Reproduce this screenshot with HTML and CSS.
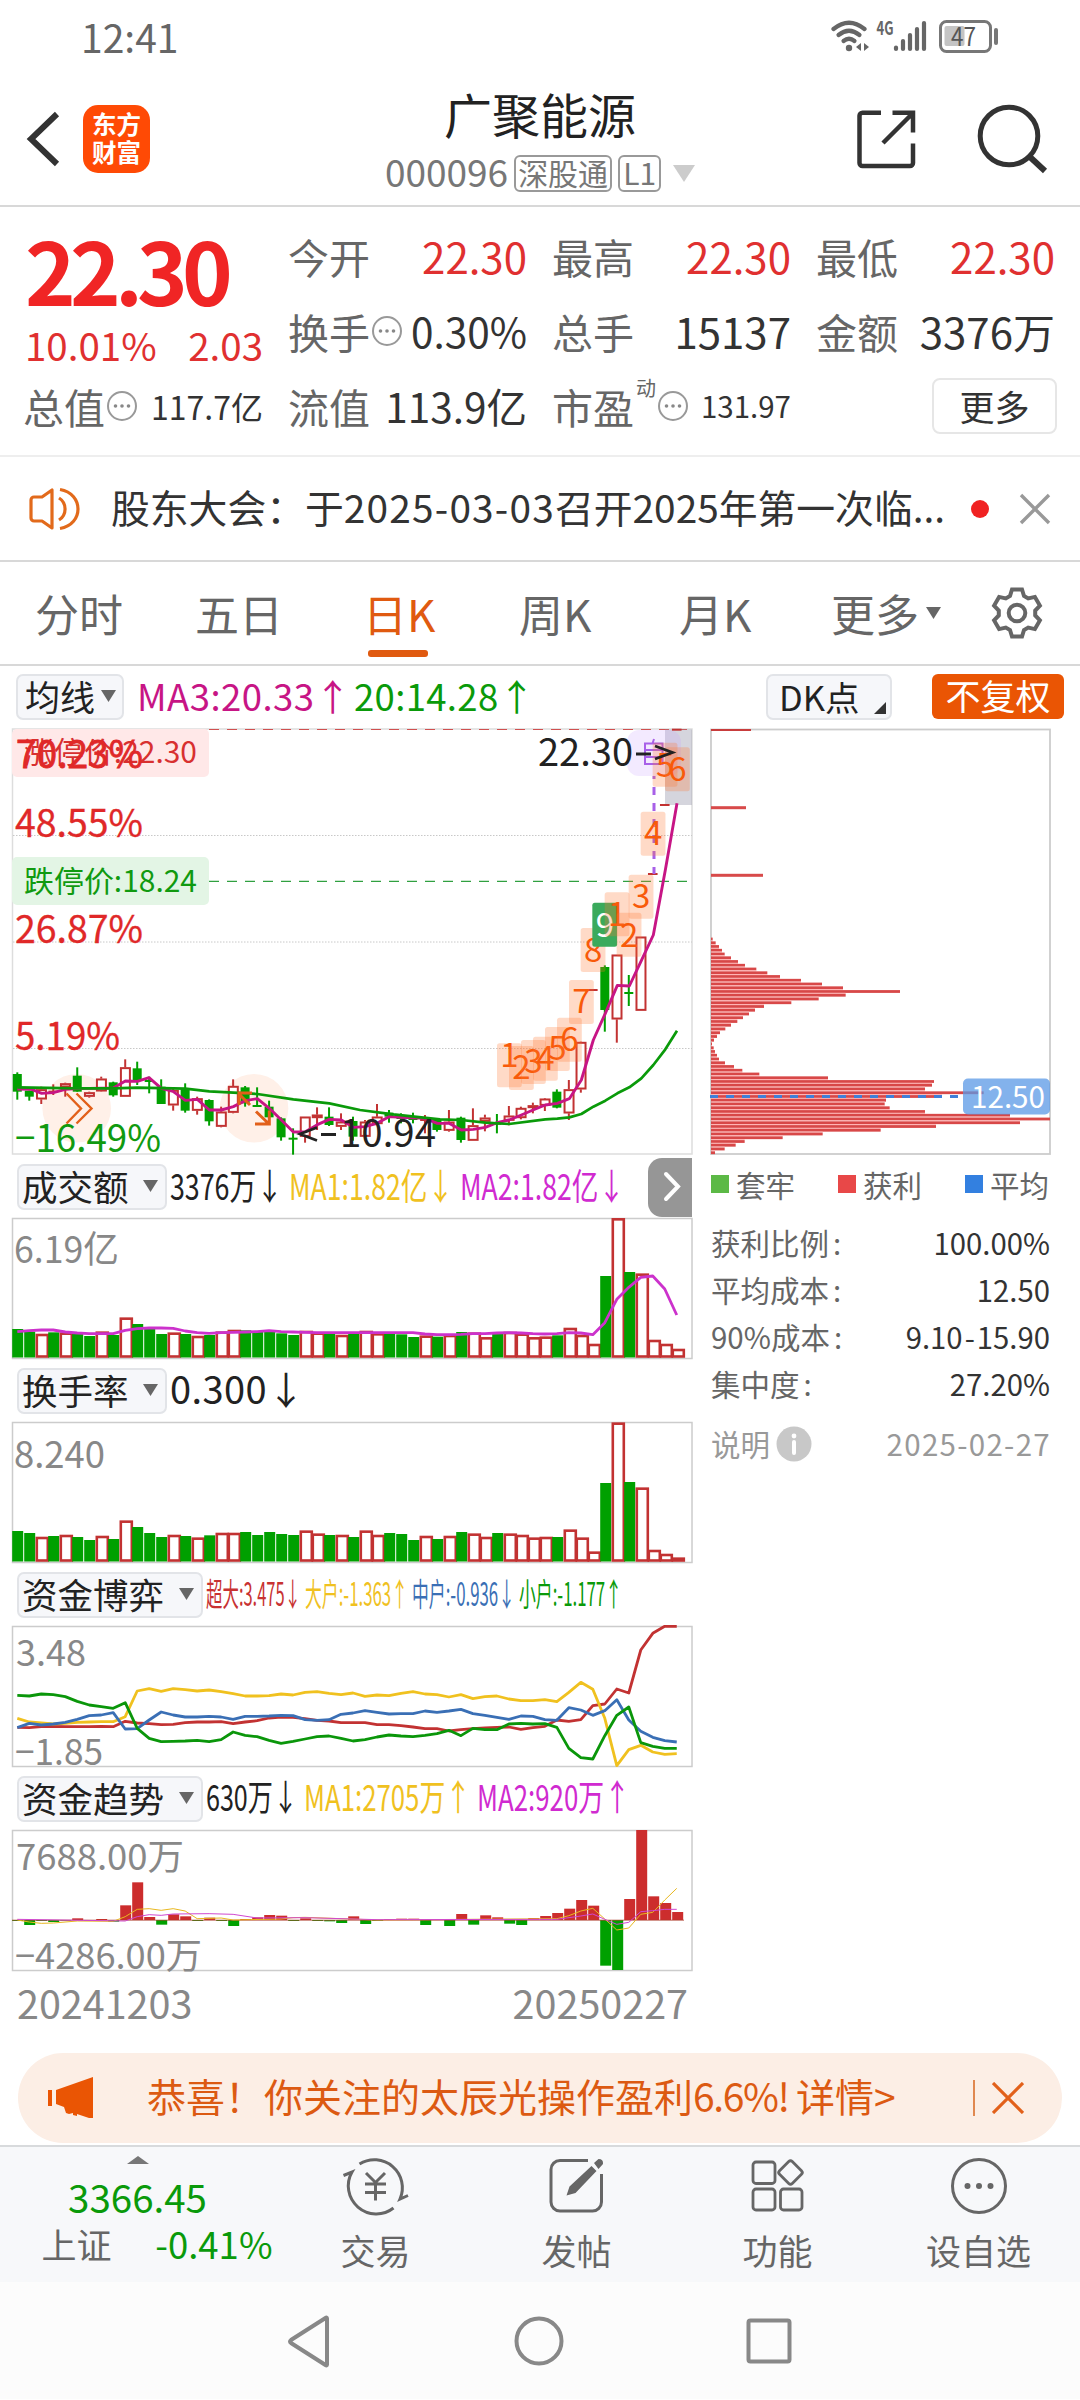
FILE: index.html
```html
<!DOCTYPE html>
<html lang="zh-CN">
<head>
<meta charset="utf-8">
<title>广聚能源 000096</title>
<link rel="stylesheet" href="styles.css">
</head>
<body>
<div class="statusbar">
  <span class="clock">12:41</span>
  <svg class="status-icons" width="180" height="44" viewBox="826 14 180 44">
    <g fill="none" stroke="#666" stroke-width="4.2" stroke-linecap="round">
      <path d="M833.5 29 Q849 16.500 864.500 29"/><path d="M838.500 35 Q849 26.500 859.500 35"/><path d="M843.500 41 Q849 36.500 854.500 41"/>
    </g>
    <circle cx="849" cy="48" r="3.200" fill="#666"/>
    <path d="M861 43v8l-5-4zM864 43v8l5-4z" fill="#666"/>
    <text x="876.500" y="34.500" class="net" textLength="17" lengthAdjust="spacingAndGlyphs">4G</text>
    <g stroke="#666" stroke-width="4.200" stroke-linecap="round"><path d="M896 47.500v1.500M903 41v8M910 35v14M917 29v20M924 23v26"/></g>
    <rect x="940.500" y="21.500" width="50" height="30" rx="6" fill="none" stroke="#777" stroke-width="3"/>
    <rect x="944.500" y="26" width="20" height="20" rx="2" fill="#c4c4c4"/>
    <text x="951" y="46" class="bat" textLength="25" lengthAdjust="spacingAndGlyphs">47</text>
    <path d="M996 30v13" stroke="#777" stroke-width="4" stroke-linecap="round"/>
  </svg>
</div>

<header class="header">
  <div class="head-left">
    <svg width="36" height="60" viewBox="0 0 36 60"><path d="M32 5L6 30l26 25" fill="none" stroke="#333" stroke-width="6"/></svg>
    <div class="logo"><span>东方</span><span>财富</span></div>
  </div>
  <div class="head-mid">
    <h1>广聚能源</h1>
    <div class="sub"><span>000096</span><i class="badge wide">深股通</i><i class="badge">L1</i>
      <svg width="22" height="17" viewBox="0 0 22 17"><path d="M0 0h22L11 17z" fill="#ccc"/></svg></div>
  </div>
  <svg class="head-icons" width="200" height="76" viewBox="850 100 200 76">
    <g fill="none" stroke="#333" stroke-width="4.500" stroke-linejoin="round">
      <path d="M881 112.700H862.500a3 3 0 0 0-3 3V163a3 3 0 0 0 3 3H910a3 3 0 0 0 3-3V143.500"/>
      <path d="M892.500 112.700H913V132.500M912 114L883 143" stroke-linejoin="miter"/>
      <circle cx="1009" cy="136" r="28.800" stroke-width="5"/><path d="M1030 157l15 14" stroke-width="6"/>
    </g>
  </svg>
</header>

<section class="quote">
  <div class="price"><div class="big">22.30</div><div class="chg"><span>10.01%</span><span>2.03</span></div></div>
  <div class="cell"><label>今开</label><b class="up">22.30</b></div>
  <div class="cell"><label>最高</label><b class="up">22.30</b></div>
  <div class="cell"><label>最低</label><b class="up">22.30</b></div>
  <div class="cell"><label>换手</label><svg class="dots"><use href="#dots"/></svg><b class="mid">0.30%</b></div>
  <div class="cell"><label>总手</label><b>15137</b></div>
  <div class="cell"><label>金额</label><b>3376万</b></div>
  <div class="cell first"><label>总值</label><svg class="dots"><use href="#dots"/></svg><b class="small">117.7亿</b></div>
  <div class="cell"><label>流值</label><b class="mid">113.9亿</b></div>
  <div class="cell"><label>市盈</label><sup>动</sup><svg class="dots"><use href="#dots"/></svg><b class="tiny">131.97</b></div>
  <div class="cell"><button class="more">更多</button></div>
</section>
<svg width="0" height="0" class="defs"><symbol id="dots" viewBox="0 0 32 32"><circle cx="16" cy="16" r="14" fill="none" stroke="#999" stroke-width="2"/><g fill="#888"><circle cx="9.500" cy="16" r="1.800"/><circle cx="16" cy="16" r="1.800"/><circle cx="22.500" cy="16" r="1.800"/></g></symbol></svg>

<section class="notice">
  <svg width="52" height="46" viewBox="0 0 52 46" fill="none" stroke="#e26a1b" stroke-width="3.200">
    <path d="M23 4v38L13 35H5a3 3 0 0 1-3-3V14a3 3 0 0 1 3-3h8z" stroke-linejoin="round"/><path d="M30 12a13 13 0 0 1 0 22M31 3.500c24 4 24 35 0 39"/></svg>
  <p>股东大会：于<span class="dt">2025-03-03</span>召开2025年第一次临...</p>
  <i class="red-dot"></i>
  <svg width="32" height="32" viewBox="0 0 32 32"><path d="M2 2l28 28M30 2L2 30" stroke="#999" stroke-width="3.400"/></svg>
</section>

<nav class="tabs">
  <span>分时</span><span>五日</span><span class="on">日K</span><span>周K</span><span>月K</span><span>更多<svg width="15" height="12" viewBox="0 0 15 12"><path d="M0 0h15L7.500 12z" fill="#666"/></svg></span>
  <svg width="54" height="54" viewBox="-27 -27 54 54" fill="none" stroke="#666" stroke-width="4"><path d="M-7-17L-5-23.500H5L7-17L11.200-14.600L17.900-16.100L22.900-7.400L18.200-2.400V2.400L22.900 7.400L17.900 16.100L11.200 14.600L7 17L5 23.500H-5L-7 17L-11.200 14.600L-17.900 16.100L-22.900 7.400L-18.200 2.400V-2.400L-22.900-7.400L-17.900-16.100L-11.200-14.600Z"/><circle r="8.300"/></svg>
</nav>

<div class="ma-row">
  <span class="pick ma-pick">均线<svg width="15" height="12" viewBox="0 0 15 12"><path d="M0 0h15L7.500 12z" fill="#666"/></svg></span>
  <svg class="ma-text" width="420" height="60" viewBox="124 667 420 60">
    <text x="137" y="711" textLength="214" fill="#c71585">MA3:20.33↑</text>
    <text x="354" y="711" textLength="181" fill="#0a9a0a">20:14.28↑</text>
  </svg>
  <span class="pick dk">DK点<i></i></span>
  <span class="noadj">不复权</span>
</div>

<main class="board">
  <div class="left">
    <svg id="kline" width="700" height="430" viewBox="0 727 700 430"></svg>
    <div class="strip">
      <span class="pick">成交额<svg width="15" height="12" viewBox="0 0 15 12"><path d="M0 0h15L7.500 12z" fill="#666"/></svg></span>
      <svg width="525" height="60" viewBox="167 1157 525 60">
        <text x="170" y="1200" textLength="113" lengthAdjust="spacingAndGlyphs" fill="#222">3376万↓</text>
        <text x="289" y="1200" textLength="165" lengthAdjust="spacingAndGlyphs" fill="#f0c11f">MA1:1.82亿↓</text>
        <text x="460" y="1200" textLength="165" lengthAdjust="spacingAndGlyphs" fill="#d02ad0">MA2:1.82亿↓</text>
        <path d="M692 1158V1217H662a14 14 0 0 1-14-14v-31a14 14 0 0 1 14-14z" fill="#969696"/>
        <path d="M666 1174l12 12.500-12 12.500" fill="none" stroke="#fff" stroke-width="4" stroke-linecap="round"/>
      </svg>
    </div>
    <svg id="volume" width="700" height="143" viewBox="0 1217 700 143"></svg>
    <div class="strip s61">
      <span class="pick">换手率<svg width="15" height="12" viewBox="0 0 15 12"><path d="M0 0h15L7.500 12z" fill="#666"/></svg></span>
      <svg width="525" height="61" viewBox="167 1360 525 61">
        <text x="170" y="1404" textLength="135" font-size="38" fill="#222">0.300↓</text>
      </svg>
    </div>
    <svg id="turnover" width="700" height="143" viewBox="0 1421 700 143"></svg>
    <div class="strip s61">
      <span class="pick w4">资金博弈<svg width="15" height="12" viewBox="0 0 15 12"><path d="M0 0h15L7.500 12z" fill="#666"/></svg></span>
      <svg width="489" height="61" viewBox="203 1564 489 61" class="small-text">
        <text x="206" y="1606" textLength="95" lengthAdjust="spacingAndGlyphs" fill="#c83232">超大:3.475↓</text>
        <text x="305" y="1606" textLength="103" lengthAdjust="spacingAndGlyphs" fill="#f0c11f">大户:-1.363↑</text>
        <text x="412" y="1606" textLength="103" lengthAdjust="spacingAndGlyphs" fill="#3a6fb5">中户:-0.936↓</text>
        <text x="519" y="1606" textLength="103" lengthAdjust="spacingAndGlyphs" fill="#0a9a0a">小户:-1.177↑</text>
      </svg>
    </div>
    <svg id="game" width="700" height="143" viewBox="0 1625 700 143"></svg>
    <div class="strip s61">
      <span class="pick w4">资金趋势<svg width="15" height="12" viewBox="0 0 15 12"><path d="M0 0h15L7.500 12z" fill="#666"/></svg></span>
      <svg width="489" height="61" viewBox="203 1768 489 61">
        <text x="206" y="1811" textLength="92" lengthAdjust="spacingAndGlyphs" fill="#222">630万↓</text>
        <text x="304" y="1811" textLength="167" lengthAdjust="spacingAndGlyphs" fill="#f0c11f">MA1:2705万↑</text>
        <text x="477" y="1811" textLength="153" lengthAdjust="spacingAndGlyphs" fill="#d02ad0">MA2:920万↑</text>
      </svg>
    </div>
    <svg id="trend" width="700" height="143" viewBox="0 1829 700 143"></svg>
    <div class="dates"><span>20241203</span><span>20250227</span></div>
  </div>
  <aside class="right">
    <svg id="chips" width="369" height="430" viewBox="700 727 369 430"></svg>
    <ul class="legend"><li class="lg">套牢</li><li class="lr">获利</li><li class="lb">平均</li></ul>
    <dl class="stats">
      <div><dt>获利比例<s>:</s></dt><dd>100.00%</dd></div>
      <div><dt>平均成本<s>:</s></dt><dd>12.50</dd></div>
      <div><dt>90%成本<s>:</s></dt><dd>9.10<em>-</em>15.90</dd></div>
      <div><dt>集中度<s>:</s></dt><dd>27.20%</dd></div>
    </dl>
    <div class="explain"><span>说明</span><svg width="36" height="36" viewBox="0 0 36 36"><circle cx="18" cy="18" r="17.500" fill="#c8c8c8"/><circle cx="18" cy="10" r="2.400" fill="#fff"/><path d="M18 16v11" stroke="#fff" stroke-width="4" stroke-linecap="round"/></svg><time>2025-02-27</time></div>
  </aside>
</main>

<div class="banner">
  <svg width="46" height="42" viewBox="0 0 46 42"><path d="M0 13h4v16H0zM8 13L45 0v41H41L29 37v2l-4-1v-2l-4 1-3-1-2-6-8-3z" fill="#ea5504"/></svg>
  <p>恭喜！你关注的太辰光操作盈利<span>6.6%! </span>详情&gt;</p>
  <i></i>
  <svg width="32" height="32" viewBox="0 0 32 32"><path d="M1 1l30 30M31 1L1 31" stroke="#e2601a" stroke-width="3.200"/></svg>
</div>

<footer class="bottom">
  <div class="index">
    <svg width="22" height="8" viewBox="0 0 22 8"><path d="M0 8L11 0l11 8z" fill="#777"/></svg>
    <b>3366.45</b>
    <div><span>上证</span><em>-0.41%</em></div>
  </div>
  <a><svg width="68" height="60" viewBox="342 2156 68 60" fill="none" stroke="#666" stroke-width="3">
    <path d="M359.500 2164A28 28 0 0 1 400 2199l8-3.500M343.500 2175.500l8.500-3.500A28 28 0 0 0 393.500 2208" /><path d="M366 2173l9.500 9.500 9.500-9.500M375.500 2182.500v18M365 2184h21M365 2192.500h21"/></svg>交易</a>
  <a><svg width="58" height="60" viewBox="549 2156 58 60" fill="none" stroke="#666" stroke-width="3">
    <path d="M589 2160.500H561a9 9 0 0 0-9 9V2202a9 9 0 0 0 9 9H593.500a9 9 0 0 0 9-9V2174"/><path d="M567.500 2195.500l3-9 22-20.500 5 5-21 22zM595 2163l4.500-4q5 0 4.500 5l-4.500 5z" fill="#666" stroke="none"/></svg>发帖</a>
  <a><svg width="58" height="60" viewBox="750 2156 58 60" fill="none" stroke="#666" stroke-width="2.800">
    <rect x="754" y="2162" width="22" height="21.500" rx="3"/><rect x="754" y="2189" width="22" height="21" rx="3"/><rect x="781.500" y="2189" width="21.500" height="21" rx="3"/><rect x="782.500" y="2163.500" width="18" height="18" rx="2.500" transform="rotate(45 791.500 2172.500)"/></svg>功能</a>
  <a><svg width="58" height="60" viewBox="950 2156 58 60"><circle cx="979" cy="2186" r="26.500" fill="none" stroke="#666" stroke-width="3"/><g fill="#666"><circle cx="967.500" cy="2186" r="3"/><circle cx="979" cy="2186" r="3"/><circle cx="990.500" cy="2186" r="3"/></g></svg>设自选</a>
</footer>
<div class="sysnav">
  <svg width="48" height="56" viewBox="284 2313 48 56"><path d="M327 2318.500v46q0 1.500-1.500.500L291 2343q-2-1.500 0-3L325.500 2318q1.500-1 1.500.500z" fill="none" stroke="#888" stroke-width="4"/></svg>
  <svg width="50" height="50" viewBox="0 0 50 50"><circle cx="25" cy="25" r="22.500" fill="none" stroke="#888" stroke-width="4"/></svg>
  <svg width="48" height="48" viewBox="0 0 48 48"><rect x="3.500" y="3.500" width="41" height="41" rx="2" fill="none" stroke="#888" stroke-width="4"/></svg>
</div>
<script src="charts.js"></script>
</body>
</html>
```
FILE: styles.css
```css
* { box-sizing: border-box; margin: 0; padding: 0; }
body { width: 1080px; height: 2400px; background: #fff; color: #222; font-family: "Noto Sans CJK SC", "Noto Sans", sans-serif; line-height: 1; overflow: hidden; }
svg { display: block; flex: none; }
i, em { font-style: normal; }
s { text-decoration: none; margin-left: 4px; }
.defs { position: absolute; }

.statusbar { height: 72px; display: flex; justify-content: space-between; padding: 14px 74px 0 81px; }
.clock { font-size: 39px; color: #666; line-height: 44px; }
.net { font-size: 19px; font-weight: 700; fill: #666; }
.bat { font-size: 25px; fill: #555; }

.header { height: 135px; display: grid; grid-template-columns: 350px 380px 1fr; border-bottom: 2px solid #d8d8d8; }
.head-left { display: flex; align-items: center; padding: 0 0 0 25px; gap: 22px; height: 134px; }
.logo { width: 67px; height: 68px; border-radius: 15px; background: #ff4a05; color: #fff; font-size: 24.5px; font-weight: 700; display: flex; flex-direction: column; align-items: center; justify-content: center; line-height: 28px; padding-bottom: 3px; }
.head-mid { display: flex; flex-direction: column; align-items: center; padding-top: 16px; }
.head-mid h1 { font-size: 48px; font-weight: 400; line-height: 50px; }
.sub { display: flex; align-items: center; font-size: 37px; color: #777; margin-top: 14px; height: 42px; }
.sub > span { line-height: 38px; padding-bottom: 4px; }
.badge { height: 37px; border: 2px solid #999; border-radius: 6px; font-size: 30px; line-height: 30px; padding: 0 3px; margin-left: 6px; }
.badge.wide { padding: 0 2px; }
.sub svg { margin-left: 12px; }
.head-icons { margin: 28px 0 0 120px; }

.quote { height: 250px; border-bottom: 2px solid #eee; padding: 14px 25px 0 25px; display: grid; grid-template: repeat(3, 75px) / 238px 239px 239px 239px; column-gap: 25px; }
.price { grid-row: 1 / 3; }
.big { font-size: 86px; font-weight: 600; line-height: 96px; letter-spacing: -5.8px; color: #f02525; }
.chg { display: flex; justify-content: space-between; font-size: 38.5px; color: #e03030; line-height: 46px; padding: 4px 0 0; }
.cell { display: flex; align-items: center; height: 70px; }
.cell label { font-size: 41px; color: #666; }
.cell.first { margin-left: -2px; }
.cell b { font-weight: 400; font-size: 42px; margin-left: auto; color: #333; }
.cell b.up { color: #e03030; }
.cell b.mid { font-size: 40.5px; }
.cell b.small { font-size: 32px; margin-right: 0; }
.cell b.tiny { font-size: 29.5px; }
.cell sup { font-size: 20px; color: #666; align-self: flex-start; padding-top: 7px; margin-left: 2px; }
.dots { width: 32px; height: 32px; margin-left: 1px; }
.more { margin-left: auto; margin-right: -2px; width: 125px; height: 56px; border: 2px solid #e6e6e6; border-radius: 8px; background: #fff; font: 35px/48px "Noto Sans CJK SC", sans-serif; color: #333; }

.notice { height: 105px; border-bottom: 2px solid #d8d8d8; display: flex; align-items: center; padding: 0 29px; }
.notice p { width: 840px; margin-left: 30px; font-size: 38.8px; color: #333; white-space: nowrap; line-height: 44px; padding-bottom: 5px; height: 50px; }
.notice .dt { letter-spacing: 1.2px; }
.red-dot { width: 18px; height: 18px; border-radius: 50%; background: #f02222; margin: 0 30px 0 21px; }
.notice > svg:last-child { margin-left: auto; }

.tabs { height: 104px; border-bottom: 2px solid #d8d8d8; display: grid; grid-template-columns: 160px 168px 156px 160px 152px 159px 54px; padding-left: 35px; align-items: start; font-size: 44px; color: #666; }
.tabs span { display: flex; align-items: center; height: 98px; gap: 7px; line-height: 46px; position: relative; top: 2px; }
.tabs > svg { margin-top: 24px; }
.tabs .on { color: #e05a10; }
.tabs .on::after { content: ""; position: absolute; left: 5px; top: 86px; width: 60px; height: 7px; border-radius: 3px; background: #e05a10; }

.ma-row { height: 61px; display: flex; align-items: center; padding: 0 16px; }
.pick { width: 150px; height: 46px; border: 2px solid #e2e4e8; border-radius: 7px; background: #f6f7fa; font-size: 35.5px; line-height: 40px; padding: 0 7px 2px 3px; display: flex; align-items: center; justify-content: space-between; flex: none; }
.pick.w4 { width: 186px; }
.ma-pick { width: 108px; font-size: 35px; padding: 0 6px 2px 7px; }
.ma-text text, .strip text { white-space: pre; }
.ma-text { font-size: 36.5px; }
.dk { width: 126px; margin-left: 222px; padding: 0 4px 2px 11px; font-size: 34.5px; }
.dk i { border: 6px solid #333; border-top-color: transparent; border-left-color: transparent; align-self: flex-end; margin-bottom: 2px; }
.noadj { width: 132px; height: 45px; margin-left: 40px; background: #ea5504; color: #fff; border-radius: 6px; font-size: 35px; line-height: 41px; text-align: center; }

.board { display: grid; grid-template-columns: 700px 369px; height: 1309px; }
.strip { display: flex; align-items: center; height: 60px; padding-left: 17px; font-size: 36px; }
.strip.s61 { height: 61px; }
.small-text { font-size: 32px; }
.dates { display: flex; justify-content: space-between; padding: 7px 12px 0 17px; color: #888; font-size: 39.5px; line-height: 46px; }
#game { overflow: visible; }

.legend { list-style: none; display: flex; justify-content: space-between; padding: 11px 20px 0 11px; font-size: 29.5px; color: #666; line-height: 32px; }
.legend li { display: flex; align-items: center; gap: 7px; }
.legend li::before { content: ""; width: 18px; height: 18px; background: #5cb946; }
.legend .lr::before { background: #e84848; }
.legend .lb::before { background: #3380e0; }
.stats { padding: 18px 19px 0 11px; font-size: 29.5px; }
.stats div { display: flex; justify-content: space-between; height: 47px; align-items: center; line-height: 38px; }
.stats dt { color: #666; }
.stats dd { color: #333; font-size: 29.3px; }
.stats dd em { padding: 0 2px; }
.explain { display: flex; align-items: center; height: 40px; margin-top: 18px; padding: 0 18px 0 11px; color: #999; font-size: 29.5px; }
.explain svg { margin-left: 6px; }
.explain time { margin-left: auto; letter-spacing: 1.3px; }

.banner { margin: 17px 18px 0; height: 90px; border-radius: 45px; background: #fceee5; display: flex; align-items: center; padding: 0 38px 0 30px; }
.banner p { margin-left: 53px; font-size: 39px; line-height: 44px; color: #dc5a12; width: 821px; white-space: pre; padding-bottom: 6px; }
.banner p span { letter-spacing: -1.4px; }
.banner i { width: 2px; height: 36px; background: #e08850; margin: 0 17px 0 6px; }

.bottom { height: 137px; margin-top: 2px; border-top: 2px solid #d8dadc; background: #f7f8fa; display: grid; grid-template-columns: 275px repeat(4, 201px); color: #666; font-size: 35px; }
.bottom a { display: flex; flex-direction: column; align-items: center; padding-top: 9px; line-height: 36px; gap: 16px; }
.index { display: flex; flex-direction: column; align-items: center; padding-top: 9px; color: #0a9a0a; }
.index b { font-size: 38.5px; font-weight: 400; line-height: 44px; margin-top: 10px; }
.index div { display: flex; width: 231px; justify-content: space-between; margin: 7px 0 0 39px; line-height: 38px; }
.index span { color: #666; }
.index em { font-size: 36.5px; }
.sysnav { height: 117px; background: #fcfcfc; display: flex; align-items: center; justify-content: space-between; padding: 0 287px 0 284px; }
```
FILE: charts.js
```js
var RED = '#c23232', GREEN = '#00a000', STEP = 11.99, X0 = 17.3;
function cx(i) { return X0 + STEP * i; }
function n(v) { return (+v).toFixed(2); }
function rect(x, y, w, h, fill, extra) { return '<rect x="' + n(x) + '" y="' + n(y) + '" width="' + n(w) + '" height="' + n(h) + '" fill="' + fill + '" ' + (extra || '') + '/>'; }
function line(x1, y1, x2, y2, c, w, extra) { return '<path d="M' + n(x1) + ' ' + n(y1) + 'L' + n(x2) + ' ' + n(y2) + '" stroke="' + c + '" stroke-width="' + w + '" fill="none" ' + (extra || '') + '/>'; }
function poly(pts, c, w) { return '<polyline points="' + pts.map(function (p) { return n(p[0]) + ',' + n(p[1]); }).join(' ') + '" fill="none" stroke="' + c + '" stroke-width="' + w + '" stroke-linejoin="round"/>'; }
function text(x, y, s, size, fill, len) { return '<text x="' + x + '" y="' + y + '" font-size="' + size + '" fill="' + fill + '"' + (len ? ' textLength="' + len + '" lengthAdjust="spacingAndGlyphs"' : '') + '>' + s + '</text>'; }
function put(id, s) { document.getElementById(id).innerHTML = s; }
function frame(y, h, c) { return '<rect x="12.5" y="' + y + '" width="679.5" height="' + h + '" fill="none" stroke="' + (c || '#ccc') + '" stroke-width="1.5"/>'; }

/* Daily candles: direction, body top, body bottom, high, low */
var candles = [
['g',1062,1115,1057,1139],['g',1112,1130,1112,1142],['r',1108,1138,1100,1152],['r',1115,1118,1093,1125],['r',1090,1102,1088,1130],['g',1067,1115,1042,1115],['r',1117,1130,1115,1133],['r',1076,1114,1070,1115],['g',1087,1126,1085,1130],['r',1042,1130,1018,1130],
['g',1045,1080,1025,1095],['g',1080,1083,1070,1120],['g',1100,1152,1078,1152],['r',1110,1156,1105,1172],['g',1105,1172,1090,1178],['r',1135,1172,1130,1184],['g',1140,1204,1138,1217],['r',1175,1220,1160,1222],['r',1098,1178,1078,1180],['g',1102,1150,1098,1160],
['g',1155,1158,1102,1160],['g',1160,1192,1142,1200],['g',1195,1252,1192,1262],['g',1253,1257,1225,1304],['r',1190,1250,1190,1268],['r',1184,1194,1162,1230],['g',1190,1215,1162,1218],['r',1205,1220,1180,1230],['g',1203,1250,1190,1262],['r',1205,1250,1200,1252],
['r',1190,1212,1152,1215],['g',1178,1190,1170,1208],['g',1190,1197,1180,1210],['g',1190,1200,1178,1210],['r',1200,1203,1185,1240],['g',1200,1230,1195,1235],['r',1205,1232,1170,1235],['g',1193,1260,1190,1268],['r',1216,1262,1165,1262],['r',1193,1205,1184,1234],
['g',1208,1211,1182,1240],['r',1187,1202,1158,1216],['r',1164,1194,1160,1198],['r',1156,1164,1148,1180],['r',1136,1157,1134,1173],['g',1115,1163,1108,1165],['r',1108,1180,1080,1200],['r',966,1108,965,1118],['r',810,810,810,810],['g',741,870,736,935],
['r',704,898,704,968],['g',816,820,765,858],['r',650,872,650,872],['r',462,462,462,462],['r',255,255,255,255],['r',29,29,29,29]];
function ky(v) { return 720 + v / 3; }
var s = frame(729, 425, '#ddd');
[835.5, 942, 1048.5].forEach(function (y) { s += line(13, y, 692, y, '#c8c8c8', 1, 'stroke-dasharray="1.5 1.5"'); });
s += '<circle cx="76.7" cy="1108.3" r="34.3" fill="#fff0e8"/><circle cx="254" cy="1108.3" r="34.3" fill="#fff0e8"/>';
s += rect(12, 729, 197, 48, '#ffe8e8', 'rx="5"') + rect(12, 857, 197, 48, '#e3f5e5', 'rx="5"');
s += line(209, 729.5, 692, 729.5, '#d05050', 1.2, 'stroke-dasharray="10 8"') + line(209, 881.3, 692, 881.3, '#30a040', 1.3, 'stroke-dasharray="10 8"');
s += rect(665, 729.5, 27, 75.5, '#9a9aae', 'fill-opacity=".42"');
s += rect(627, 730, 54, 46, '#c8a0ff', 'fill-opacity=".22" rx="12"');
candles.forEach(function (c, i) {
  var x = cx(i), t = ky(c[1]), b = ky(c[2]), col = c[0] === 'r' ? RED : GREEN;
  if (c[0] === 'g') {
    s += line(x, ky(c[3]), x, ky(c[4]), col, 2) + rect(x - 4.5, t, 9, Math.max(b - t, 2), col);
  } else {
    s += line(x, ky(c[3]), x, t, col, 2) + line(x, b, x, ky(c[4]), col, 2);
    s += b - t < 2 ? rect(x - 4.8, t - 1, 9.6, 2, col) : rect(x - 4.3, t + .8, 9, b - t - 1.6, '#fff', 'stroke="' + col + '" stroke-width="2"');
  }
});
var ma3 = [[52,1107],[95,1108],[125,1120],[160,1118],[196,1108],[232,1106],[340,1104],[376,1083],[412,1084],[447,1073],[484,1105],[519,1114],[556,1141],[592,1138],[628,1170],[664,1170],[700,1160],[736,1142],[772,1136],[808,1165],[844,1200],[880,1236],[916,1235],[952,1214],[988,1198],[1024,1200],[1060,1222],[1095,1220],[1131,1210],[1167,1190],[1203,1192],[1275,1195],[1312,1210],[1347,1210],[1384,1230],[1420,1228],[1456,1222],[1491,1208],[1527,1200],[1564,1185],[1599,1170],[1636,1155],[1672,1150],[1708,1136],[1744,1080],[1780,960],[1816,880],[1852,796],[1888,798],[1924,722],[1960,645],[1996,450],[2031,250]];
var ma20 = [[52,1102],[232,1105],[340,1105],[412,1103],[556,1106],[628,1114],[700,1118],[772,1122],[880,1138],[988,1150],[1080,1170],[1180,1183],[1320,1198],[1384,1200],[1456,1208],[1527,1212],[1636,1198],[1672,1196],[1708,1192],[1744,1182],[1780,1160],[1816,1142],[1852,1120],[1888,1102],[1924,1075],[1960,1035],[1996,988],[2031,932]];
function kp(p) { return [p[0] / 3, ky(p[1])]; }
s += poly(ma3.map(kp), '#c71585', 2.9) + poly(ma20.map(kp), '#0a9a0a', 2.7);
s += line(654, 776, 654, 874, '#a860e8', 3, 'stroke-dasharray="8 8" stroke-dashoffset="5"');
s += '<g stroke="#a860e8" stroke-width="2" fill="none"><path d="M645 743.500h17.500v20.500H645zM645 750h17.500M645 757h17.500M654 739l-1.500 4.500"/></g>';
s += text(24, 762.5, '涨停价:22.30', 29.5, '#d83030', 173);
s += '<g stroke="#e02828" stroke-width=".8">' + text(16, 768, '70.23%', 38, '#e02828', 127) + '</g>';
s += '<g stroke="#e02828" stroke-width=".3">' + text(15, 837, '48.55%', 38, '#e02828', 128) + text(15, 943, '26.87%', 38, '#e02828', 128) + text(15, 1050, '5.19%', 38, '#e02828', 105) + '</g>';
s += text(24, 891.5, '跌停价:18.24', 29.5, '#109a10', 173);
s += '<text x="15" y="1152" font-size="38" fill="#109a10" textLength="146" lengthAdjust="spacingAndGlyphs">−16.49%</text>';
/* Sequence marks: x, y, digit, baseline */
[[411,970,'1',1042],[447,978,'2',1077],[483,960,'3',1060],[519,950,'4',1050],[555,921,'5',1020],[591,893,'6',993],[627,780,'7',880],[662,624,'8',725],[697,548,'9',650],[734,517,'1',618],[770,578,'2',680],[806,464,'3',565],[842,275,'4',376],[878,68,'5',170],[915,82,'6',183]].forEach(function (m) {
  var nine = m[2] === '9', x = 360 + m[0] / 3;
  s += rect(x, ky(m[1]), 24.8, 44, nine ? '#3aaa5c' : '#ff7830', 'rx="2.5"' + (nine ? '' : ' fill-opacity=".27"'));
  s += '<text x="' + n(x + 12.5) + '" y="' + n(ky(m[3])) + '" font-size="33" text-anchor="middle" fill="' + (nine ? '#fff' : '#f85a0a') + '">' + m[2] + '</text>';
});
s += '<g fill="none" stroke="#e2601a" stroke-width="2.4"><path d="M66.500 1093.500L81 1108.500 66.500 1123.500M76.500 1093.500L91.500 1108.500 76.500 1123.500"/><path d="M250 1105L239 1094M252 1093h-13v12M256 1111.500l13 12.500M255 1124h14.300v-13.500" stroke-width="3"/></g>';
s += '<path d="M317 1127.500L300 1134l17 6.500M321 1134.500h15M655 746l17.500 6.500L655 759M636 754h15" fill="none" stroke="#222" stroke-width="2.800"/>';
s += text(340, 1147, '10.94', 38, '#222', 96) + text(538, 766, '22.30', 38, '#222', 95);
put('kline', s);

/* r = hollow red bar, g = solid green bar */
var colors = 'ggrgrggrgrgggrgrgrrgggggrrgrgrrgggrgrgrrgrrrrgrrrgrgrrrr';
function bars(tops, colorKeys, scale, base) {
  return tops.map(function (v, i) {
    var y = scale(v), x = 12.2 + 12 * i;
    return colorKeys[i] === 'r' ? rect(x + .6, y + 1, 11, Math.max(base - y - 2, 1), '#fff', 'stroke="' + RED + '" stroke-width="2.6"') : rect(x, y, 11, base - y, GREEN);
  }).join('');
}
function sy(v) { return 1150 + v / 3; }
var vol = [537,545,552,547,548,552,558,545,555,503,522,537,552,548,552,558,555,545,540,541,546,541,550,555,543,548,550,555,552,543,550,549,553,561,557,560,555,546,548,562,550,546,551,562,560,556,534,555,582,378,205,366,371,570,582,597];
var volMa = [545,542,540,540,546,549,551,551,551,541,536,534,534,535,543,548,550,548,547,546,545,542,545,546,547,548,548,548,548,548,548,548,548,548,552,554,554,553,551,551,549,548,549,551,552,551,548,549,554,518,448,412,382,378,417,495];
put('volume', frame(1218.5, 140) + bars(vol, colors, sy, 1357.5) + poly(volMa.map(function (v, i) { return [cx(i), sy(v)]; }), '#cc32cc', 2.8) + text(14, 1263, '6.19亿', 37, '#888', 105));
var turn = [1143,1149,1161,1158,1155,1161,1170,1158,1167,1112,1131,1149,1161,1155,1158,1163,1156,1149,1149,1146,1155,1146,1152,1155,1142,1151,1155,1155,1161,1142,1155,1149,1152,1170,1158,1167,1158,1146,1151,1161,1149,1151,1155,1163,1161,1161,1139,1163,1205,999,818,996,1013,1200,1212,1223];
put('turnover', frame(1422.5, 140) + bars(turn, colors, sy, 1561.5) + text(14, 1468, '8.240', 37, '#888', 91));

function fy(v) { return 1560 + v / 3; }
function flow(a, c, w) { return poly(a.map(function (v, i) { return [cx(i), fy(v)]; }), c, w); }
var sup = [502,503,500,499,500,500,500,499,500,484,489,491,494,493,488,486,486,485,491,486,482,474,471,472,476,481,483,488,488,488,494,494,497,501,506,506,513,509,506,504,502,501,508,503,499,480,484,479,437,432,387,399,270,220,199,199];
var big = [475,486,489,492,490,487,486,485,485,470,393,386,394,386,389,393,390,395,401,408,408,407,402,405,397,395,400,404,399,409,405,407,400,395,402,404,411,404,416,410,408,417,422,422,419,425,397,367,388,475,617,569,556,576,583,581];
var mid = [503,490,495,492,487,478,467,465,458,507,506,480,456,465,471,471,469,471,478,469,469,468,466,467,479,481,479,463,459,452,457,462,461,461,453,457,453,448,461,466,472,478,468,469,479,481,443,450,466,452,419,480,514,532,542,546];
var sml = [406,408,402,404,410,424,435,440,445,428,505,535,545,544,543,541,545,539,516,526,530,541,550,544,537,530,528,535,543,539,531,525,528,530,526,521,511,527,505,509,509,492,490,492,491,502,565,593,597,527,466,441,548,559,565,565];
put('game', frame(1626.5, 140) + text(16, 1666, '3.48', 36, '#888', 70) + text(15, 1764.5, '−1.85', 36, '#888', 88) + flow(sup, RED, 2.8) + flow(big, '#f0c11f', 2.8) + flow(mid, '#3a6fb5', 2.8) + flow(sml, '#0a960a', 2.8));

var tr = [1083,1095,1083,1086,1082,1075,1082,1077,1085,1036,967,1071,1094,1063,1069,1083,1073,1083,1098,1077,1072,1065,1067,1083,1075,1083,1084,1089,1069,1092,1083,1077,1076,1076,1095,1077,1098,1062,1094,1066,1072,1091,1095,1074,1068,1059,1046,1020,1037,1217,1230,1017,810,1009,1029,1056];
s = frame(1830.5, 140) + text(16, 1870, '7688.00万', 36, '#888', 168) + text(15, 1968.5, '−4286.00万', 36, '#888', 187);
tr.forEach(function (v, i) { var y = fy(v), x = 12.2 + 12 * i; s += y < 1920 ? rect(x, y, 11, 1920 - y, '#cc2d2d') : rect(x, 1920, 11, y - 1920, GREEN); });
s += line(12, 1920.2, 684, 1920.2, '#b04030', .8);
function sparse(a, c) { return poly(a.map(function (p) { return [cx(p[0]), fy(p[1])]; }), c, 1); }
s += sparse([[0,1080],[1,1086],[2,1090],[3,1089],[5,1083],[8,1084],[9,1070],[10,1048],[11,1046],[12,1051],[13,1046],[14,1053],[15,1076],[17,1074],[18,1080],[22,1077],[23,1073],[24,1072],[30,1080],[45,1076],[46,1067],[47,1053],[48,1045],[49,1077],[50,1110],[51,1104],[52,1063],[53,1057],[54,1020],[55,985]], '#e8b820');
s += sparse([[0,1078],[9,1083],[10,1070],[11,1064],[12,1066],[13,1062],[16,1061],[18,1063],[20,1074],[24,1073],[30,1079],[45,1078],[47,1068],[48,1062],[49,1078],[50,1093],[51,1087],[52,1055],[53,1052],[54,1048],[55,1048]], '#d048d0');
put('trend', s);

/* Cost distribution rows, bottom part at a fixed pitch */
var chip = [5,14,24,33,41,60,81,102,136,169,207,270,333,396,567,404,323,241,159,132,114,96,79,60,43,27,18,9,3,8,12,18,24,42,69,94,145,351,669,663,642,818,693,525,521,536,642,897,1017,927,675,509,335,215,101,74,41,12];
s = '<rect x="711" y="729.5" width="339" height="424.500" fill="none" stroke="#ccc" stroke-width="1.8"/>';
s += rect(711, 729, 40, 2, '#c83c3c') + rect(711, 806.2, 35, 3, '#d84a4a') + rect(711, 873.8, 52, 3, '#d84a4a');
chip.forEach(function (w, i) {
  var y = ky(657 + 11.25 * i);
  if (i) s += rect(711, y - 2.4, Math.min(w, chip[i - 1]) / 3, 1, '#ffb0b0');
  s += rect(711, y - 1.4, w / 3, 2.8, '#d84848');
});
s += line(710, 1096.5, 958, 1096.5, '#3f7fd8', 3, 'stroke-dasharray="8 8"');
s += rect(963, 1078.5, 87, 36, '#5a98e6', 'fill-opacity=".75" rx="5"') + text(971, 1107.5, '12.50', 29.5, '#fff', 74);
put('chips', s);
```
